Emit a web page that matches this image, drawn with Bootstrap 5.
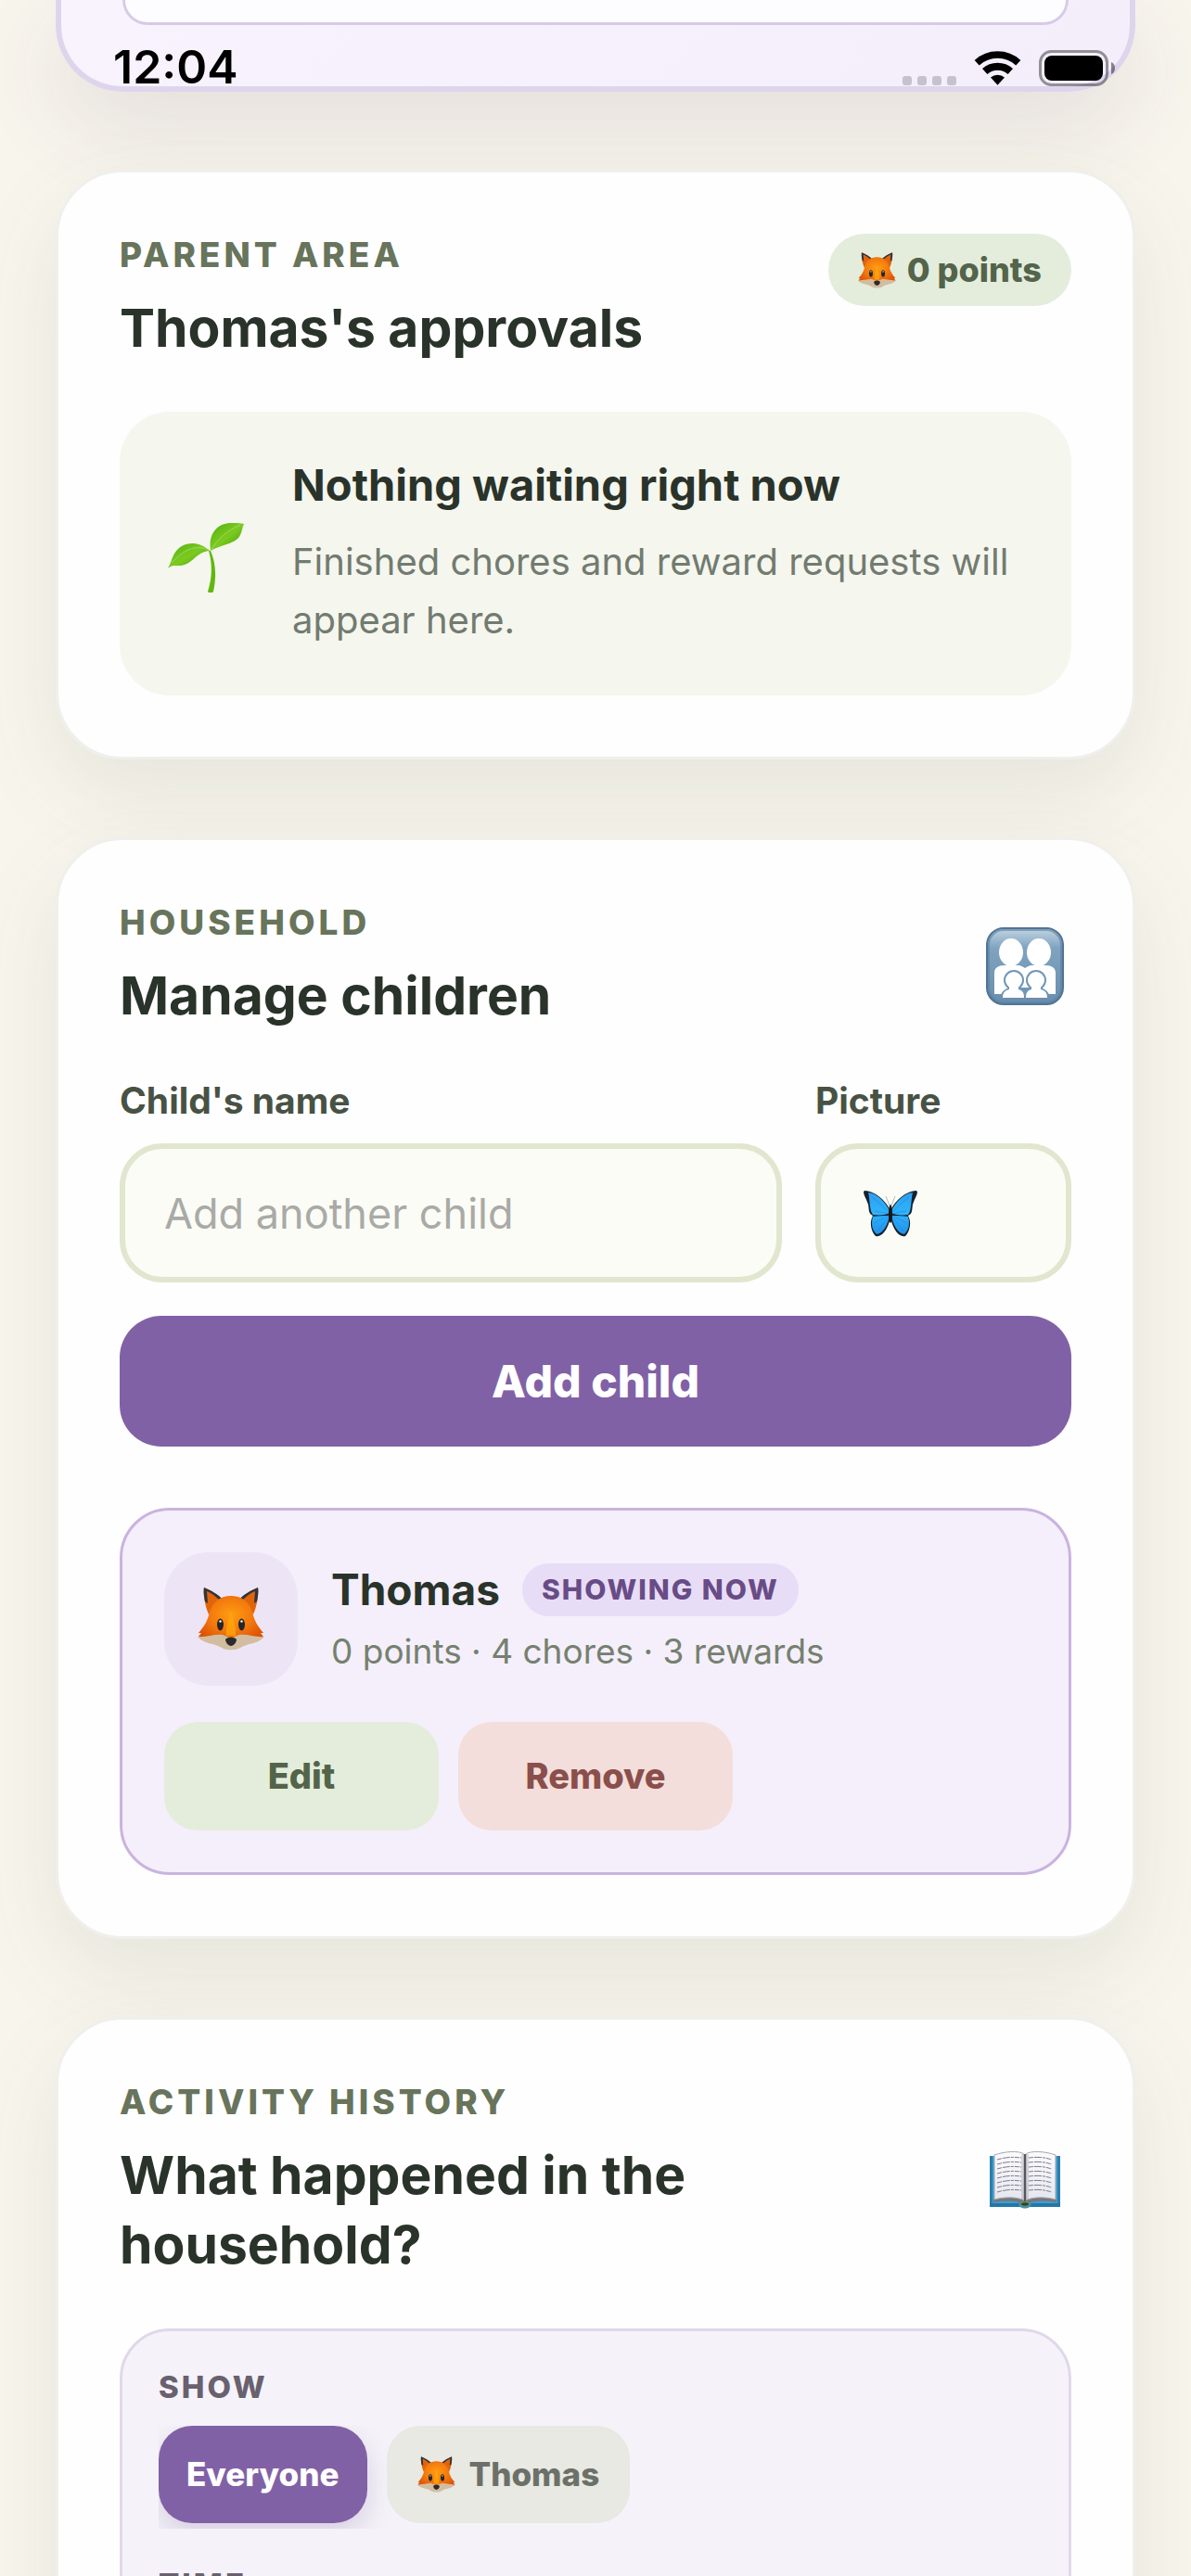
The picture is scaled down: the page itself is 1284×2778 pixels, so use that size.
<!DOCTYPE html>
<html lang="en">
<head>
<meta charset="utf-8">
<meta name="viewport" content="width=device-width, initial-scale=1">
<title>Family chores – Parent area</title>
<link href="https://cdn.jsdelivr.net/npm/bootstrap@5.3.0/dist/css/bootstrap.min.css" rel="stylesheet">
<style>
  body {
    font-family: Inter, "Liberation Sans", sans-serif;
    background: #f8f5ed;
    color: #2a332a;
  }
  .app-view { position: relative; height: 100vh; overflow: hidden; padding: 0 60px; }
  .stack { display: flex; flex-direction: column; gap: 84px; }

  /* Status bar lies over the scrolled page */
  .status-bar { position: absolute; z-index: 5; top: 44px; left: 0; right: 0; padding: 0 81px 0 122px; color: #000; }
  .clock { font-size: 50px; line-height: 57px; font-weight: 600; }
  .status-bar svg { display: block; }

  .hero-panel {
    border: 6px solid #ded5ed; border-top: 0; border-radius: 0 0 72px 72px;
    background: linear-gradient(135deg, #f8f3fd, #f4eefb);
    padding: 0 66px 66px;
    box-shadow: 0 36px 96px rgba(80, 60, 90, .12);
  }
  .hero-slot { height: 27px; border: 3px solid #d8cae6; border-top: 0; border-radius: 0 0 42px 42px; background: #fdfcfe; }

  .panel {
    border: 3px solid #eff0ec; border-radius: 72px; background: #fefefe; padding: 66px;
    box-shadow: 0 36px 96px rgba(70, 96, 60, .10);
  }
  .eyebrow { font-size: 37px; line-height: 45px; font-weight: 800; letter-spacing: 4px; color: #68745b; margin: 0 0 19px; }
  .panel-title { font-size: 57px; line-height: 75px; font-weight: 700; margin: 0; }
  .panel-head { margin-bottom: 53px; }
  .panel-head svg { flex: none; }

  .points-pill { height: 78px; padding: 0 32px; gap: 12px; border-radius: 39px; background: #e4eddc; color: #53644a; font-size: 36px; font-weight: 800; }

  .empty-note { background: #f5f6ee; border-radius: 54px; padding: 49px 48px 50px; gap: 48px; }
  .empty-title { font-size: 47px; line-height: 60px; font-weight: 700; margin: 0 0 21px; }
  .empty-text { font-size: 40px; line-height: 63px; color: #727b70; margin: 0; }

  .field-grid { display: grid; grid-template-columns: 1fr 276px; gap: 36px; }
  .field-label { display: block; font-size: 39px; line-height: 45px; font-weight: 700; color: #485244; margin-bottom: 24px; }
  .field-box.form-control { height: 150px; border: 6px solid #e1e6cf; border-radius: 46px; background: #fbfcf6; padding: 0 42px; font-size: 45px; color: #2a332a; }
  .field-box::placeholder { color: #a9aaa7; opacity: 1; }
  .picture-field { position: relative; }
  .picture-field svg { position: absolute; left: 49px; top: 49px; }

  .add-btn { height: 141px; margin-top: 36px; border: 0; border-radius: 45px; background: #8161a6; color: #fff; font-size: 48px; font-weight: 800; }

  .child-item { margin-top: 66px; border: 3px solid #cab3df; border-radius: 54px; background: #f4effb; padding: 45px; }
  .child-row { gap: 36px; }
  .avatar { width: 144px; height: 144px; border-radius: 48px; background: #ede5f6; }
  .child-name { font-size: 46px; line-height: 57px; font-weight: 700; margin: 0; }
  .now-tag { height: 57px; padding: 0 21px; border-radius: 29px; background: #e8ddf6; color: #684c86; font-size: 30px; font-weight: 800; letter-spacing: 2px; }
  .child-stats { font-size: 37px; line-height: 51px; color: #76806f; margin: 12px 0 0; }
  .action-grid { display: grid; grid-template-columns: repeat(3, 1fr); gap: 21px; margin-top: 39px; }
  .soft-btn { height: 117px; border: 0; border-radius: 36px; font-size: 38px; font-weight: 800; }
  .soft-btn.edit { background: #e4eddc; color: #53644a; }
  .soft-btn.remove { background: #f3dedb; color: #8b4f4b; }

  .filter-box { border: 3px solid #e0d8ea; border-radius: 54px; background: #f5f3f9; padding: 39px; }
  .filter-label { font-size: 33px; line-height: 42px; font-weight: 800; letter-spacing: 3px; color: #69616f; margin: 0 0 21px; }
  .chip-row { gap: 21px; padding-bottom: 6px; margin-bottom: 39px; overflow: hidden; }
  .chip { height: 105px; padding: 0 30px; border: 0; border-radius: 36px; background: #e7e9e2; color: #6c7069; font-size: 35px; font-weight: 800; gap: 15px; }
  .chip.active { background: #8161a6; color: #fff; box-shadow: 0 12px 30px rgba(95, 65, 135, .2); }
  .chip.with-face { padding: 0 33px; }
</style>
</head>
<body>
<svg width="0" height="0" class="position-absolute" aria-hidden="true">
  <defs>
    <radialGradient id="furFill" cx=".5" cy=".38" r=".6"><stop offset="0" stop-color="#ff9d12"/><stop offset=".55" stop-color="#f3790d"/><stop offset="1" stop-color="#dc5206"/></radialGradient>
    <linearGradient id="leafFill" x1="0" y1="0" x2="1" y2="1"><stop offset="0" stop-color="#4fae12"/><stop offset=".5" stop-color="#7bcb1f"/><stop offset="1" stop-color="#3f960b"/></linearGradient>
    <linearGradient id="wingFill" x1="0" y1="0" x2="0" y2="1"><stop offset="0" stop-color="#2d9ff0"/><stop offset=".5" stop-color="#2fb4fb"/><stop offset="1" stop-color="#2090ea"/></linearGradient>
    <linearGradient id="tileFill" x1="0" y1="0" x2="0" y2="1"><stop offset="0" stop-color="#c3d5e3"/><stop offset=".26" stop-color="#7fa3c0"/><stop offset="1" stop-color="#688dae"/></linearGradient>
    <linearGradient id="pageFill" x1="0" y1="0" x2="0" y2="1"><stop offset="0" stop-color="#fbfbfd"/><stop offset="1" stop-color="#e6e6f0"/></linearGradient>
    <symbol id="fox" viewBox="0 0 72 68">
      <path d="M7 0C14 3 22 7 27 14L12 29C8 20 6 9 7 0zM65 0C58 3 50 7 45 14L60 29C64 20 66 9 65 0z" fill="#e0640c"/>
      <path d="M7 0C14 3 22 7 27 13L23 13C18 8 13 5 10 4L11 17L8 15C7 10 6 4 7 0zM65 0C58 3 50 7 45 13L49 13C54 8 59 5 62 4L61 17L64 15C65 10 66 4 65 0z" fill="#30343a"/>
      <path d="M36 9C48 9 56 16 59 26C61 36 65 42 71 49L68 49L71 53C66 60 54 60 48 62L24 62C18 60 6 60 1 53L4 49L1 49C7 42 11 36 13 26C16 16 24 9 36 9z" fill="url(#furFill)"/>
      <path d="M0 53C9 54 18 50 27 51C31 52 33 54 36 54C39 54 41 52 45 51C54 50 63 54 72 53C66 61 53 60 46 65C42 68 30 68 26 65C19 60 6 61 0 53z" fill="#d2bda0"/>
      <path d="M36 26C39 34 42 44 41 52H31C30 44 33 34 36 26z" fill="#fda80c" opacity=".75"/>
      <ellipse cx="24.500" cy="40" rx="3.500" ry="6.500" fill="#26262a"/><ellipse cx="47.500" cy="40" rx="3.500" ry="6.500" fill="#26262a"/>
      <circle cx="24.500" cy="36.500" r="1.200" fill="#fff"/><circle cx="47.500" cy="36.500" r="1.200" fill="#fff"/>
      <path d="M30 56C32 53 40 53 42 56C42 59 39 63 36 63C33 63 30 59 30 56z" fill="#2c2a2c"/>
    </symbol>
  </defs>
</svg>

<div class="app-view">
  <div class="status-bar d-flex justify-content-between align-items-center">
    <span class="clock">12:04</span>
    <svg width="232" height="44" viewBox="0 0 232 44" role="img" aria-label="Signal, Wi-Fi and battery">
      <g fill="#c7c1ce"><rect x="2" y="31" width="10" height="10" rx="3"/><rect x="18" y="31" width="10" height="10" rx="3"/><rect x="34" y="31" width="10" height="10" rx="3"/><rect x="50" y="31" width="10" height="10" rx="3"/></g>
      <g fill="none" stroke="#000">
        <path d="M82.200 16.700A33 33 0 0 1 126.800 16.700" stroke-width="7.500"/>
        <path d="M90.700 26A20.500 20.500 0 0 1 118.300 26" stroke-width="8"/>
      </g>
      <path d="M97 32.500A11.500 11.500 0 0 1 112 32.500L104.500 40.800z"/>
      <rect x="150.500" y="4.500" width="72" height="36" rx="12" fill="none" stroke="#000" stroke-opacity=".4" stroke-width="3"/>
      <rect x="155" y="9" width="63" height="27" rx="8"/>
      <path d="M227 16C230 17 231 20 231 22.500C231 25 230 28 227 29z" fill="#000" fill-opacity=".45"/>
    </svg>
  </div>

  <main class="stack">
    <section class="hero-panel" aria-label="Current child"><div class="hero-slot"></div></section>

    <section class="panel">
      <div class="panel-head d-flex justify-content-between align-items-start">
        <div>
          <p class="eyebrow">PARENT AREA</p>
          <h2 class="panel-title">Thomas's approvals</h2>
        </div>
        <span class="points-pill d-inline-flex align-items-center"><svg width="41" height="39"><use href="#fox"/></svg>0 points</span>
      </div>
      <div class="empty-note d-flex align-items-center">
        <svg class="flex-shrink-0" width="90" height="84" viewBox="-2 -5 90 84" aria-hidden="true">
          <path d="M48 34C53 45 55 60 51 78C50 80 46 80 45 78C50 62 50 48 46 34z" fill="#63b80f"/>
          <path d="M48 34C45 14 57 3 72 4C76 4 80 4 84 5C82 9 82 13 80 17C75 27 62 26 48 34z" fill="url(#leafFill)"/>
          <path d="M47 34C34 22 17 24 9 37C6 42 5 48 2 53C6 49 10 50 15 50C29 49 32 35 47 34z" fill="url(#leafFill)"/>
          <path d="M48 34C55 22 66 12 80 6M46 33C34 28 22 30 6 47" fill="none" stroke="#a2d765" stroke-width="1"/>
        </svg>
        <div>
          <h3 class="empty-title">Nothing waiting right now</h3>
          <p class="empty-text">Finished chores and reward requests will appear here.</p>
        </div>
      </div>
    </section>

    <section class="panel">
      <div class="panel-head d-flex justify-content-between align-items-center">
        <div>
          <p class="eyebrow">HOUSEHOLD</p>
          <h2 class="panel-title">Manage children</h2>
        </div>
        <svg width="100" height="84" viewBox="0 0 100 84" aria-hidden="true">
          <rect x="9" y="1" width="82" height="82" rx="18" fill="url(#tileFill)" stroke="#507493" stroke-width="2"/>
          <rect x="11" y="3" width="78" height="78" rx="16" fill="none" stroke="#5b7f9e" stroke-width="2" opacity=".6"/>
          <g fill="#fff">
            <ellipse cx="35" cy="27" rx="13" ry="15"/><ellipse cx="65" cy="27" rx="13" ry="15"/>
            <path d="M17 72V49C17 44 21 41 28 41H42C46 41 48 43 50 44C52 43 54 41 58 41H72C79 41 83 44 83 49V72z"/>
          </g>
          <g fill="#7097b7"><circle cx="38" cy="57" r="11"/><circle cx="62" cy="57" r="11"/><path d="M24 73C25 69 29 66 34 65H66C71 66 75 69 76 73z"/></g>
          <g fill="#fff"><circle cx="38" cy="57" r="9"/><circle cx="62" cy="57" r="9"/>
            <path d="M26 76C26 70 29 68 33 67V62H43V67C47 68 49 70 49 76zM51 76C51 70 53 68 57 67V62H67V67C71 68 74 70 74 76z"/></g>
        </svg>
      </div>
      <form onsubmit="return false">
        <div class="field-grid">
          <div>
            <label class="field-label" for="childName">Child's name</label>
            <input class="form-control field-box" id="childName" type="text" placeholder="Add another child">
          </div>
          <div>
            <label class="field-label" for="childPicture">Picture</label>
            <div class="picture-field">
              <input class="form-control field-box" id="childPicture" type="text">
              <svg width="64" height="54" viewBox="0 0 64 54" aria-hidden="true">
                <g id="wing">
                  <path d="M32 24C28 14 17 3 4 2C1 4 6 10 8 17C9 22 8 27 13 29C9 36 11 46 16 51C25 53 31 38 32 30z" fill="#17202c"/>
                  <path d="M31 24C27 15 18 5 8 4C10 11 9 23 13 28C21 29 28 28 31 26zM31 29C25 29 18 29 13 30C11 38 12 44 17 49C25 48 29 38 31 29z" fill="url(#wingFill)"/>
                  <path d="M31 26C24 20 18 13 12 9M31 27L15 24M31 29L18 46M30 29L14 37" stroke="#1c86da" stroke-width="1" fill="none" opacity=".6"/>
                </g>
                <use href="#wing" transform="matrix(-1 0 0 1 64 0)"/>
                <path d="M31 18L27 8M33 18L37 8" stroke="#bbb" stroke-width="1"/>
                <ellipse cx="32" cy="27" rx="2" ry="10" fill="#1b1512"/>
              </svg>
            </div>
          </div>
        </div>
        <button class="btn add-btn w-100" type="submit">Add child</button>
      </form>

      <article class="child-item">
        <div class="child-row d-flex align-items-center">
          <div class="avatar d-flex align-items-center justify-content-center flex-shrink-0"><svg width="72" height="68"><use href="#fox"/></svg></div>
          <div>
            <div class="d-flex align-items-center gap-4">
              <h3 class="child-name">Thomas</h3>
              <span class="now-tag d-inline-flex align-items-center">SHOWING NOW</span>
            </div>
            <p class="child-stats">0 points · 4 chores · 3 rewards</p>
          </div>
        </div>
        <div class="action-grid">
          <button class="btn soft-btn edit" type="button">Edit</button>
          <button class="btn soft-btn remove" type="button">Remove</button>
        </div>
      </article>
    </section>

    <section class="panel">
      <div class="panel-head d-flex justify-content-between align-items-center">
        <div>
          <p class="eyebrow">ACTIVITY HISTORY</p>
          <h2 class="panel-title">What happened in the<br>household?</h2>
        </div>
        <svg width="100" height="64" viewBox="0 0 100 64" aria-hidden="true">
          <path d="M12 6H88V61H12z" fill="#3e9fcf"/><path d="M12 57H88V61H12z" fill="#2377a8"/><path d="M12 6H15V57H12zM85 6H88V57H85z" fill="#2b7fac"/>
          <path d="M17 51L16 56C28 54 42 54 48 58H52C58 54 72 54 84 56L83 51z" fill="#77777a"/>
          <path d="M17 5C28 1 44 0 49 4V54C42 50 28 50 17 53zM83 5C72 1 56 0 51 4V54C58 50 72 50 83 53z" fill="url(#pageFill)" stroke="#a5a5ae" stroke-width="1"/>
          <path d="M46 4H54V54H46z" fill="#8a8a96" opacity=".3"/><path d="M50 4V55" stroke="#55555e" stroke-width="2"/>
          <g fill="none" stroke="#7d7d86" stroke-width="1" stroke-dasharray="5 1 8 1 3 1"><path id="ln" d="M20 10C30 7 38 7 46 8M54 8C62 7 70 7 79 10"/><use href="#ln" y="5"/><use href="#ln" y="10"/><use href="#ln" y="15"/><use href="#ln" y="20"/><use href="#ln" y="25"/><use href="#ln" y="30"/><use href="#ln" y="35"/></g>
          <path d="M43 58C45 54 55 54 57 58C56 64 44 64 43 58z" fill="#2f92c4"/><path d="M45 58C47 55 53 55 55 58C53 61 47 61 45 58z" fill="#1d4a42" stroke="#a78a22" stroke-width="1"/>
        </svg>
      </div>
      <div class="filter-box">
        <p class="filter-label">SHOW</p>
        <div class="chip-row d-flex">
          <button class="btn chip active" type="button" aria-pressed="true">Everyone</button>
          <button class="btn chip with-face d-inline-flex align-items-center" type="button" aria-pressed="false"><svg width="41" height="39"><use href="#fox"/></svg>Thomas</button>
        </div>
        <p class="filter-label">TIME</p>
      </div>
    </section>
  </main>
</div>
<script src="https://cdn.jsdelivr.net/npm/bootstrap@5.3.0/dist/js/bootstrap.bundle.min.js"></script>
</body>
</html>
